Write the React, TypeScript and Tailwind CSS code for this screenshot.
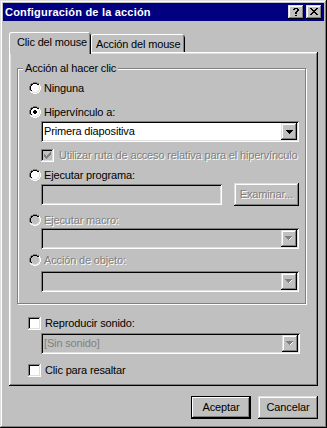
import React from "react";

// classic 3d colours
const FACE = "#c0c0c0";

type PixMap = Record<string, string>;

function Pixels({ rows, colors }: { rows: string[]; colors: PixMap }) {
  const w = rows[0].length;
  const h = rows.length;
  return (
    <svg width={w} height={h} viewBox={`0 0 ${w} ${h}`} shapeRendering="crispEdges" className="block shrink-0">
      {rows.flatMap((row, y) =>
        row.split("").map((ch, x) =>
          colors[ch] ? <rect key={`${x}-${y}`} x={x} y={y} width={1} height={1} fill={colors[ch]} /> : null
        )
      )}
    </svg>
  );
}

const RADIO = [
  "....GGGG....",
  "..GGKKKKGG..",
  ".GKKffffKKW.",
  ".GKffffffLW.",
  "GKffffffffLW",
  "GKffffffffLW",
  "GKffffffffLW",
  "GKffffffffLW",
  ".GKffffffLW.",
  ".WLLffffLLW.",
  "..WWLLLLWW..",
  "....WWWW....",
];

const RADIO_ON = [
  "....GGGG....",
  "..GGKKKKGG..",
  ".GKKffffKKW.",
  ".GKffffffLW.",
  "GKfffddfffLW",
  "GKffddddffLW",
  "GKffddddffLW",
  "GKfffddfffLW",
  ".GKffffffLW.",
  ".WLLffffLLW.",
  "..WWLLLLWW..",
  "....WWWW....",
];

const CHECK = [
  "GGGGGGGGGGGGW",
  "GKKKKKKKKKKLW",
  "GKfffffffffLW",
  "GKfffffffdfLW",
  "GKffffffddfLW",
  "GKfdfffdddfLW",
  "GKfddfdddffLW",
  "GKfdddddfffLW",
  "GKffdddffffLW",
  "GKfffdfffffLW",
  "GKfffffffffLW",
  "GLLLLLLLLLLLW",
  "WWWWWWWWWWWWW",
];

const TRIANGLE = ["xxxxxxx", ".xxxxx.", "..xxx..", "...x..."];
const TRIANGLE_OFF = ["xxxxxxx.", ".xxxxxw.", "..xxxw..", "...xw...", "........"];

const QUESTION = [".xxxx.", "xx..xx", "....xx", "...xx.", "..xx..", "..xx..", "......", "..xx.."];
const CLOSE = ["xx....xx", ".xx..xx.", "..xxxx..", "...xx...", "..xxxx..", ".xx..xx.", "xx....xx"];

const SUNKEN = "shadow-[inset_1px_1px_#808080,inset_-1px_-1px_#fff,inset_2px_2px_#000,inset_-2px_-2px_#dfdfdf]";
const RAISED = "shadow-[inset_-1px_-1px_#000,inset_1px_1px_#dfdfdf,inset_-2px_-2px_#808080,inset_2px_2px_#fff]";
const RAISED_PANEL = "shadow-[inset_-1px_-1px_#000,inset_1px_1px_#fff,inset_-2px_-2px_#808080,inset_2px_2px_#dfdfdf]";
const DISABLED_TEXT = "text-[#808080] [text-shadow:1px_1px_0_#fff]";

function Radio({ label, checked, disabled }: { label: string; checked?: boolean; disabled?: boolean }) {
  return (
    <div className="flex items-center h-[16px]">
      <Pixels
        rows={checked ? RADIO_ON : RADIO}
        colors={{ G: "#808080", K: "#000", L: "#dfdfdf", W: "#fff", f: disabled ? FACE : "#fff", d: "#000" }}
      />
      <span className={`ml-[3px] whitespace-nowrap ${disabled ? DISABLED_TEXT : ""}`}>{label}</span>
    </div>
  );
}

function Check({ label, checked, disabled, gap = "ml-[4px]" }: { label: string; checked?: boolean; disabled?: boolean; gap?: string }) {
  return (
    <div className="flex items-center h-[16px]">
      <Pixels
        rows={CHECK}
        colors={{
          G: "#808080",
          K: "#000",
          L: "#dfdfdf",
          W: "#fff",
          f: disabled ? FACE : "#fff",
          d: checked ? (disabled ? "#808080" : "#000") : disabled ? FACE : "#fff",
        }}
      />
      <span className={`${gap} whitespace-nowrap ${disabled ? DISABLED_TEXT : ""}`}>{label}</span>
    </div>
  );
}

function Combo({ value, disabled, className = "" }: { value?: string; disabled?: boolean; className?: string }) {
  return (
    <div className={`h-[21px] flex p-[2px] ${SUNKEN} ${disabled ? "bg-[#c0c0c0]" : "bg-white"} ${className}`}>
      <div className={`flex-1 flex items-center pl-[1px] ${disabled ? "text-[#808080]" : ""}`}>{value}</div>
      <div className={`w-[16px] h-[17px] flex items-center justify-center bg-[#c0c0c0] ${RAISED}`}>
        {disabled ? (
          <Pixels rows={TRIANGLE_OFF} colors={{ x: "#808080", w: "#fff" }} />
        ) : (
          <Pixels rows={TRIANGLE} colors={{ x: "#000" }} />
        )}
      </div>
    </div>
  );
}

function TitleButton({ glyph }: { glyph: string[] }) {
  return (
    <div className={`w-[16px] h-[14px] bg-[#c0c0c0] flex items-center justify-center pb-[1px] ${RAISED}`}>
      <Pixels rows={glyph} colors={{ x: "#000" }} />
    </div>
  );
}

export default function App() {
  return (
    <div
      className={`w-[327px] h-[428px] bg-[#c0c0c0] p-[3px] flex flex-col font-['Liberation_Sans',Arial,sans-serif] text-[11px] tracking-[-0.15px] leading-none text-black select-none ${RAISED}`}
    >
      {/* title bar */}
      <div className="h-[18px] shrink-0 bg-[#000080] flex items-center justify-between px-[2px]">
        <span className="text-white font-bold text-[11px] tracking-[0.2px] whitespace-nowrap">Configuración de la acción</span>
        <div className="flex gap-[2px]">
          <TitleButton glyph={QUESTION} />
          <TitleButton glyph={CLOSE} />
        </div>
      </div>

      {/* tabs */}
      <div className="mt-[11px] ml-[6px] h-[20px] flex items-start shrink-0">
        <div className="relative z-10 w-[82px] h-[22px] bg-[#c0c0c0] rounded-t-[3px] flex items-center pl-[8px] pb-[2px] shadow-[inset_1px_0_#fff,inset_0_1px_#fff,inset_-1px_0_#000,inset_-2px_0_#808080]">
          Clic del mouse
        </div>
        <div className="mt-[2px] w-[94px] h-[18px] rounded-t-[3px] flex items-center pl-[5px] pt-[2px] shadow-[inset_1px_0_#fff,inset_0_1px_#fff,inset_-1px_0_#000,inset_-2px_0_#808080]">
          Acción del mouse
        </div>
      </div>

      {/* tab panel */}
      <div className={`ml-[6px] w-[309px] h-[334px] shrink-0 flex flex-col ${RAISED_PANEL}`}>
        <div className="relative mt-[16px] ml-[8px] w-[289px] h-[236px] border border-[#808080] shadow-[inset_1px_1px_#fff,1px_1px_#fff] pl-[11px] flex flex-col">
          <span className="absolute -top-[6px] left-[5px] px-[2px] bg-[#c0c0c0]">Acción al hacer clic</span>

          <div className="mt-[11px]">
            <Radio label="Ninguna" />
          </div>
          <div className="mt-[8px]">
            <Radio label="Hipervínculo a:" checked />
          </div>
          <Combo value="Primera diapositiva" className="mt-[1px] ml-[12px] w-[258px]" />
          <div className="mt-[5px] ml-[12px]">
            <Check label="Utilizar ruta de acceso relativa para el hipervínculo" checked disabled gap="ml-[5px]" />
          </div>
          <div className="mt-[4px]">
            <Radio label="Ejecutar programa:" />
          </div>
          <div className="ml-[12px] h-[23px] flex items-center gap-[12px]">
            <div className={`w-[181px] h-[21px] bg-[#c0c0c0] ${SUNKEN}`} />
            <div className={`w-[65px] h-[23px] flex items-center justify-center bg-[#c0c0c0] ${RAISED} ${DISABLED_TEXT}`}>
              Examinar...
            </div>
          </div>
          <div className="mt-[6px]">
            <Radio label="Ejecutar macro:" disabled />
          </div>
          <Combo disabled className="ml-[12px] w-[258px]" />
          <div className="mt-[3px]">
            <Radio label="Acción de objeto:" disabled />
          </div>
          <Combo disabled className="mt-[3px] ml-[12px] w-[258px]" />
        </div>

        <div className="mt-[11px] ml-[19px]">
          <Check label="Reproducir sonido:" />
        </div>
        <Combo value="[Sin sonido]" disabled className="mt-[2px] ml-[32px] w-[259px]" />
        <div className="mt-[8px] ml-[19px]">
          <Check label="Clic para resaltar" />
        </div>
      </div>

      {/* dialog buttons */}
      <div className="mt-[10px] flex justify-end gap-[7px] pr-[6px]">
        <div className="w-[60px] h-[23px] border border-black flex items-center justify-center bg-[#c0c0c0] shadow-[inset_-1px_-1px_#000,inset_1px_1px_#fff,inset_-2px_-2px_#808080]">
          Aceptar
        </div>
        <div className={`w-[60px] h-[23px] flex items-center justify-center bg-[#c0c0c0] ${RAISED}`}>Cancelar</div>
      </div>
    </div>
  );
}
